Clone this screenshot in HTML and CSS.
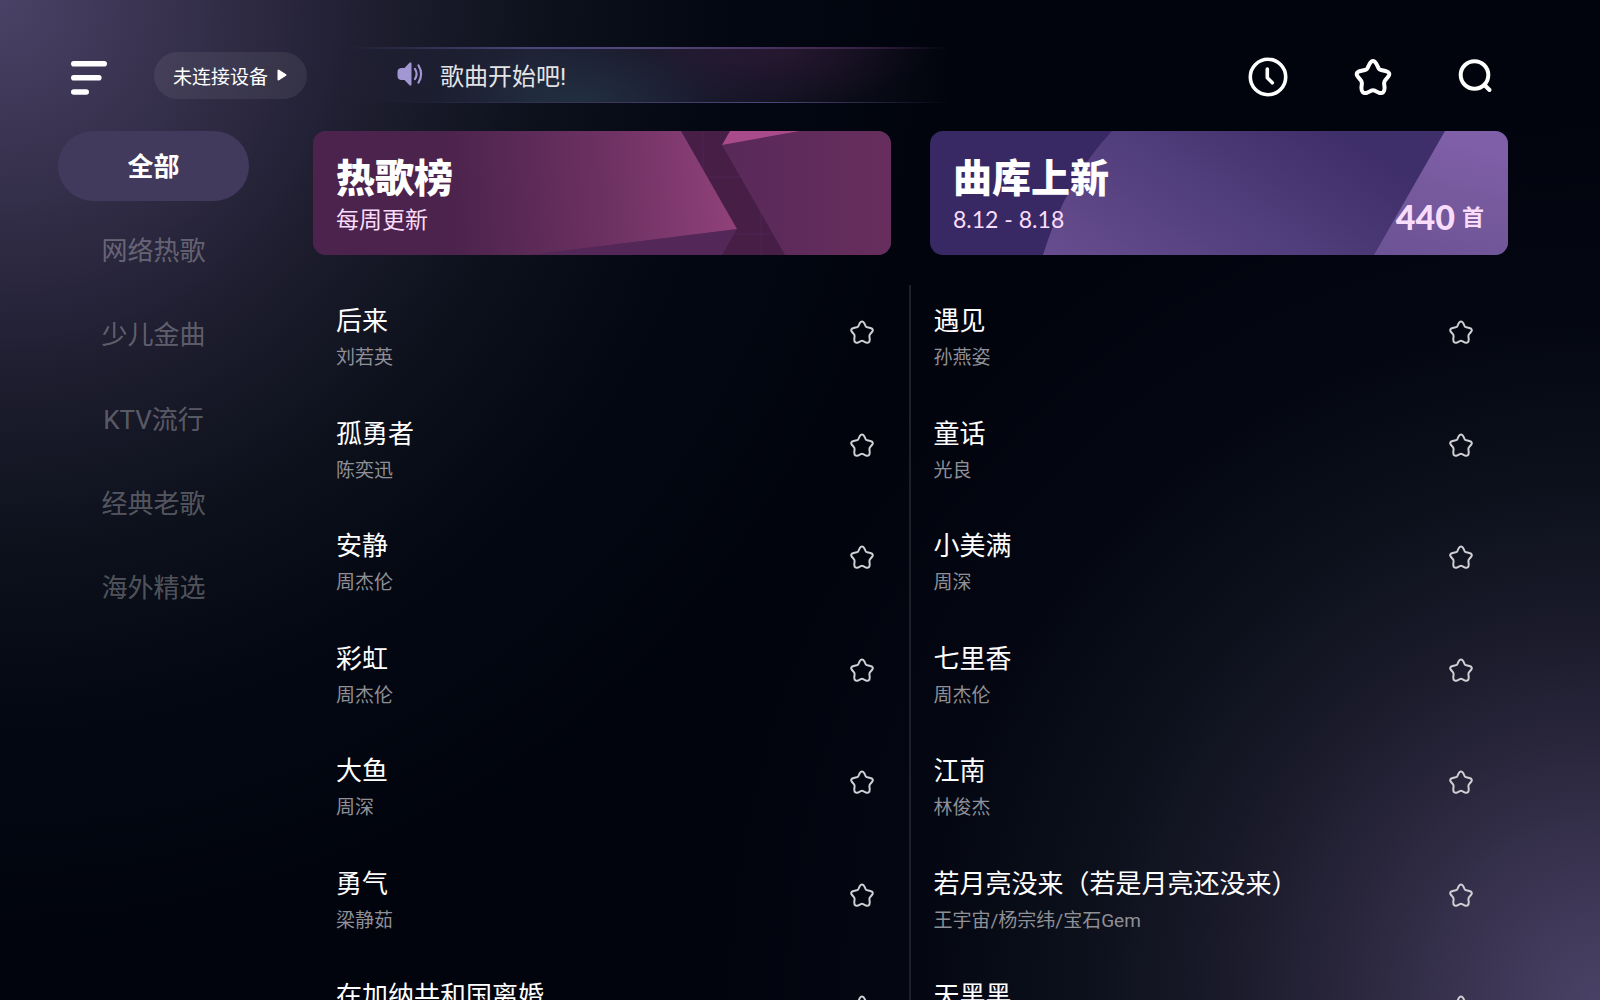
FILE: index.html
```html
<!DOCTYPE html>
<html lang="zh-CN">
<head>
  <meta charset="UTF-8">
  <title>K歌</title>
  <link rel="stylesheet" href="styles.css">
</head>
<body>

  <svg class="defs" width="0" height="0" aria-hidden="true">
    <symbol id="star" viewBox="0 0 36 36" overflow="visible">
      <path d="M14.5 5Q18-.8 21.5 5L23.5 9.2Q24.3 10.6 26 11L30.5 12Q36.6 13.6 32.9 18L30.2 21.3Q29 22.8 29.1 24.5L29.6 28.8Q29.6 35.4 24 33.8L19.8 31.7Q18 30.9 16.2 31.7L12 33.8Q6.4 35.4 6.4 28.8L6.9 24.5Q7 22.8 5.8 21.3L3.1 18Q-.6 13.6 5.5 12L10 11Q11.7 10.6 12.5 9.2Z"/>
    </symbol>
  </svg>

  <header class="topbar">
    <button class="icon-btn menu" aria-label="菜单">
      <svg width="36" height="40" viewBox="0 0 36 40"><path d="M2.800 8.800h30.400M2.800 22.800h25M2.800 37h12.400" stroke="#fff" stroke-width="5.600" stroke-linecap="round"/></svg>
    </button>
    <button class="device">未连接设备
      <svg width="10" height="12" viewBox="0 0 10 12"><path d="M1.500 1.500v9L8.500 6z" fill="#fff" stroke="#fff" stroke-width="2" stroke-linejoin="round"/></svg>
    </button>
    <div class="notice">
      <svg width="26" height="24" viewBox="0 0 26 24">
        <path d="M4 6h3.500l5-5.200Q14.500-.5 14.500 2v20q0 2.500-2 1.200L7.500 18H4Q.5 17.500.5 14v-4Q.5 6.500 4 6z" fill="#a397d3"/>
        <path d="M18 7q3.200 5 0 10M21.500 3.500q5.200 8.500 0 17" fill="none" stroke="#a397d3" stroke-width="2.200" stroke-linecap="round"/>
      </svg>
      <span>歌曲开始吧!</span>
    </div>
    <nav class="actions">
      <button class="icon-btn" aria-label="历史">
        <svg width="40" height="40" viewBox="0 0 40 40" fill="none" stroke="#fff" stroke-width="3.600" stroke-linecap="round" stroke-linejoin="round"><circle cx="20" cy="20" r="17.700"/><path d="M19.300 12v8.800l5 5"/></svg>
      </button>
      <button class="icon-btn" aria-label="收藏">
        <svg class="star-big" width="36" height="36"><use href="#star"/></svg>
      </button>
      <button class="icon-btn" aria-label="搜索">
        <svg width="36" height="36" viewBox="0 0 36 36" fill="none" stroke="#fff" stroke-width="4" stroke-linecap="round"><circle cx="16.500" cy="16" r="13.800"/><path d="M26.500 26l5 5"/></svg>
      </button>
    </nav>
  </header>

  <div class="layout">
    <nav class="sidebar">
      <button class="tab active">全部</button>
      <button class="tab">网络热歌</button>
      <button class="tab">少儿金曲</button>
      <button class="tab">KTV流行</button>
      <button class="tab">经典老歌</button>
      <button class="tab">海外精选</button>
    </nav>

    <main class="content">
      <div class="cards">
        <a class="card hot" href="#">
          <svg class="card-bg" viewBox="0 0 578 124" preserveAspectRatio="none">
            <defs>
              <linearGradient id="h1" gradientUnits="userSpaceOnUse" x1="130" y1="20" x2="424" y2="0"><stop offset="0" stop-color="#4b234c"/><stop offset=".55" stop-color="#6d3162"/><stop offset="1" stop-color="#92427a"/></linearGradient>
              <linearGradient id="h2"><stop offset="0" stop-color="#582959"/><stop offset="1" stop-color="#672e5d"/></linearGradient>
            </defs>
            <rect width="578" height="124" fill="#461f47"/>
            <path d="M390 0v124M448 80v44M366 46h76M410 103h64" stroke="#54275a" stroke-width="1" opacity=".6"/>
            <path d="M217 124L424 98 409 124z" fill="#532858"/>
            <path d="M0 0H368L424 98 217 124H0z" fill="url(#h1)"/>
            <path d="M409 14L487 0H578V124H472z" fill="url(#h2)"/>
            <path d="M417 0H487L409 14z" fill="#a94b8a"/>
          </svg>
          <div class="card-text">
            <h2>热歌榜</h2>
            <p>每周更新</p>
          </div>
        </a>
        <a class="card fresh" href="#">
          <svg class="card-bg" viewBox="0 0 578 124" preserveAspectRatio="none">
            <defs>
              <linearGradient id="n1" gradientUnits="userSpaceOnUse" x1="190" y1="170" x2="330" y2="-50"><stop offset="0" stop-color="#674d8f"/><stop offset=".55" stop-color="#503d7b"/><stop offset="1" stop-color="#3e2e69"/></linearGradient>
              <linearGradient id="n2" x1="0" y1="1" x2=".3" y2="0"><stop offset="0" stop-color="#6c5395"/><stop offset=".6" stop-color="#765a9d"/><stop offset="1" stop-color="#7f5fa8"/></linearGradient>
            </defs>
            <rect width="578" height="124" fill="#382964"/>
            <path d="M182 0Q136 49 113 124H578V0z" fill="url(#n1)"/>
            <path d="M515 0L444 124H578V0z" fill="url(#n2)"/>
          </svg>
          <div class="card-text">
            <h2>曲库上新</h2>
            <p>8.12 - 8.18</p>
          </div>
          <div class="count"><b>440</b>首</div>
        </a>
      </div>

      <ul class="songs">
        <li><div><h3>后来</h3><p>刘若英</p></div><button class="icon-btn" aria-label="收藏"><svg class="star" width="24" height="24"><use href="#star"/></svg></button></li>
        <li><div><h3>遇见</h3><p>孙燕姿</p></div><button class="icon-btn" aria-label="收藏"><svg class="star" width="24" height="24"><use href="#star"/></svg></button></li>
        <li><div><h3>孤勇者</h3><p>陈奕迅</p></div><button class="icon-btn" aria-label="收藏"><svg class="star" width="24" height="24"><use href="#star"/></svg></button></li>
        <li><div><h3>童话</h3><p>光良</p></div><button class="icon-btn" aria-label="收藏"><svg class="star" width="24" height="24"><use href="#star"/></svg></button></li>
        <li><div><h3>安静</h3><p>周杰伦</p></div><button class="icon-btn" aria-label="收藏"><svg class="star" width="24" height="24"><use href="#star"/></svg></button></li>
        <li><div><h3>小美满</h3><p>周深</p></div><button class="icon-btn" aria-label="收藏"><svg class="star" width="24" height="24"><use href="#star"/></svg></button></li>
        <li><div><h3>彩虹</h3><p>周杰伦</p></div><button class="icon-btn" aria-label="收藏"><svg class="star" width="24" height="24"><use href="#star"/></svg></button></li>
        <li><div><h3>七里香</h3><p>周杰伦</p></div><button class="icon-btn" aria-label="收藏"><svg class="star" width="24" height="24"><use href="#star"/></svg></button></li>
        <li><div><h3>大鱼</h3><p>周深</p></div><button class="icon-btn" aria-label="收藏"><svg class="star" width="24" height="24"><use href="#star"/></svg></button></li>
        <li><div><h3>江南</h3><p>林俊杰</p></div><button class="icon-btn" aria-label="收藏"><svg class="star" width="24" height="24"><use href="#star"/></svg></button></li>
        <li><div><h3>勇气</h3><p>梁静茹</p></div><button class="icon-btn" aria-label="收藏"><svg class="star" width="24" height="24"><use href="#star"/></svg></button></li>
        <li><div><h3>若月亮没来（若是月亮还没来）</h3><p>王宇宙/杨宗纬/宝石Gem</p></div><button class="icon-btn" aria-label="收藏"><svg class="star" width="24" height="24"><use href="#star"/></svg></button></li>
        <li><div><h3>在加纳共和国离婚</h3></div><button class="icon-btn" aria-label="收藏"><svg class="star" width="24" height="24"><use href="#star"/></svg></button></li>
        <li><div><h3>天黑黑</h3></div><button class="icon-btn" aria-label="收藏"><svg class="star" width="24" height="24"><use href="#star"/></svg></button></li>
      </ul>
    </main>
  </div>

</body>
</html>
```
FILE: styles.css
```css
* {
  box-sizing: border-box;
  margin: 0;
  padding: 0;
}
body {
  height: 100vh;
  overflow: hidden;
  color: #fff;
  font-family: Roboto, "Noto Sans CJK SC", sans-serif;
  background:
    radial-gradient(circle 960px at 0 0, #4a4266 0, #38324f 17%, #2a273e 29%, #1c1c2d 41%, #0d111c 57%, rgba(5, 9, 20, 0.8) 74%, rgba(1, 4, 13, 0) 100%),
    radial-gradient(circle 920px at 100% 100%, #4a4266 0, #38324f 16%, #28253a 29%, #1a1a2a 41%, #0c101b 57%, rgba(5, 8, 19, 0.8) 74%, rgba(1, 4, 13, 0) 100%),
    #01040d;
}
button {
  border: none;
  background: none;
  color: inherit;
  font: inherit;
  cursor: pointer;
}
a {
  color: inherit;
  text-decoration: none;
}
svg {
  display: block;
}
.defs {
  position: absolute;
}
.icon-btn {
  flex: none;
}

/* top bar */
.topbar {
  display: flex;
  align-items: center;
  padding: 47px 106px 0 71px;
}
.device {
  display: flex;
  align-items: center;
  gap: 9px;
  height: 47px;
  margin-left: 47px;
  padding: 0 20px 0 19px;
  border-radius: 24px;
  background: rgba(255, 255, 255, 0.07);
  font-size: 19px;
  white-space: nowrap;
}
.notice {
  display: flex;
  align-items: center;
  gap: 17px;
  width: 600px;
  height: 56px;
  margin-left: 42px;
  padding: 0 0 2px 48px;
  color: #e3e3e6;
  font-size: 24px;
  background:
    linear-gradient(90deg, transparent, #49467a 30%, #53487a 50%, #422850 80%, transparent) top / 100% 2px no-repeat,
    linear-gradient(90deg, transparent 10%, #343256 35%, #4d4679 70%, transparent) bottom / 100% 1px no-repeat,
    radial-gradient(ellipse 140px 60px at 38% 100%, rgba(36, 58, 76, 0.6), transparent),
    radial-gradient(ellipse 150px 60px at 72% 0, rgba(60, 30, 64, 0.5), transparent),
    linear-gradient(90deg, transparent, rgba(44, 46, 72, 0.55) 30%, rgba(40, 35, 60, 0.6) 60%, rgba(12, 12, 24, 0.5) 90%, transparent);
}
.actions {
  display: flex;
  align-items: center;
  gap: 67px;
  margin-left: auto;
  padding-top: 3px;
}
.star-big {
  fill: none;
  stroke: #fff;
  stroke-width: 4px;
  stroke-linejoin: round;
  overflow: visible;
}

.layout {
  display: flex;
  gap: 64px;
  padding: 28px 92px 0 58px;
}

/* left categories */
.sidebar {
  flex: none;
  display: flex;
  flex-direction: column;
  justify-content: space-between;
  width: 191px;
  height: 492px;
}
.tab {
  height: 70px;
  padding-bottom: 4px;
  border-radius: 35px;
  font-size: 26px;
  color: rgba(255, 255, 255, 0.3);
}
.tab.active {
  background: #413a5c;
  color: #fff;
  font-weight: bold;
}

.content {
  flex: 1;
  min-width: 0;
}
.cards {
  display: grid;
  grid-template-columns: 1fr 1fr;
  gap: 39px;
}
.card {
  position: relative;
  display: flex;
  justify-content: space-between;
  align-items: flex-end;
  height: 124px;
  padding: 0 24px 18px 23px;
  border-radius: 13px;
  overflow: hidden;
}
.card-bg {
  position: absolute;
  inset: 0;
  width: 100%;
  height: 100%;
}
.card-text,
.count {
  position: relative;
}
.card h2 {
  font-size: 39px;
  font-weight: 900;
  line-height: 44px;
}
.card p {
  color: #f9dcfb;
  font-family: Lato, "Noto Sans CJK SC", sans-serif;
  font-size: 23px;
  line-height: 36px;
}
.count {
  display: flex;
  align-items: center;
  gap: 7px;
  color: #f9dcfb;
  font-family: Lato, "Noto Sans CJK SC", sans-serif;
  font-size: 22px;
  font-weight: bold;
  line-height: 40px;
}
.count b {
  font-size: 34px;
}

/* songs */
.songs {
  display: grid;
  grid-template-columns: 1fr 1fr;
  grid-template-rows: repeat(7, 1fr);
  height: 788px;
  margin-top: 30px;
  list-style: none;
}
.songs li {
  display: flex;
  justify-content: space-between;
  align-items: flex-start;
  padding: 18px 35px 0 23px;
}
.songs li:nth-child(odd) {
  border-right: 2px solid #1d1f29;
}
.songs h3 {
  font-size: 26px;
  font-weight: normal;
  line-height: 36px;
}
.songs p {
  color: #8f9096;
  font-size: 19px;
  line-height: 38px;
}
.songs .icon-btn {
  padding-top: 17px;
}
.star {
  fill: none;
  stroke: #d0d0d4;
  stroke-width: 3px;
  stroke-linejoin: round;
  overflow: visible;
}
```
